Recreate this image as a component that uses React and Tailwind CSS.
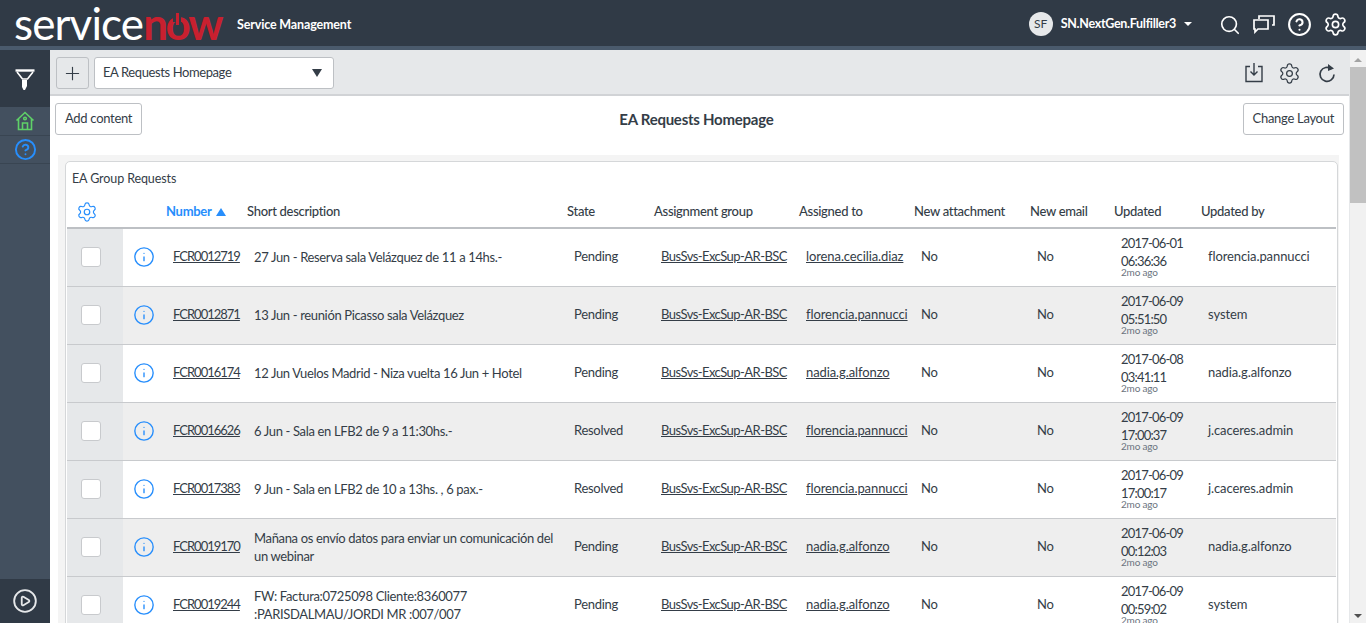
import { Search, CircleHelp, Settings, Plus, Info, CirclePlay } from 'lucide-react';

const rows = [
    { num: 'FCR0012719', desc: '27 Jun - Reserva sala Velázquez de 11 a 14hs.-', state: 'Pending', to: 'lorena.cecilia.diaz', date: '2017-06-01', time: '06:36:36', by: 'florencia.pannucci' },
    { num: 'FCR0012871', desc: '13 Jun - reunión Picasso sala Velázquez', state: 'Pending', to: 'florencia.pannucci', date: '2017-06-09', time: '05:51:50', by: 'system' },
    { num: 'FCR0016174', desc: '12 Jun Vuelos Madrid - Niza vuelta 16 Jun + Hotel', state: 'Pending', to: 'nadia.g.alfonzo', date: '2017-06-08', time: '03:41:11', by: 'nadia.g.alfonzo' },
    { num: 'FCR0016626', desc: '6 Jun - Sala en LFB2 de 9 a 11:30hs.-', state: 'Resolved', to: 'florencia.pannucci', date: '2017-06-09', time: '17:00:37', by: 'j.caceres.admin' },
    { num: 'FCR0017383', desc: '9 Jun - Sala en LFB2 de 10 a 13hs. , 6 pax.-', state: 'Resolved', to: 'florencia.pannucci', date: '2017-06-09', time: '17:00:17', by: 'j.caceres.admin' },
    { num: 'FCR0019170', desc: 'Mañana os envío datos para enviar un comunicación del un webinar', state: 'Pending', to: 'nadia.g.alfonzo', date: '2017-06-09', time: '00:12:03', by: 'nadia.g.alfonzo' },
    { num: 'FCR0019244', desc: 'FW: Factura:0725098 Cliente:8360077 :PARISDALMAU/JORDI MR :007/007', state: 'Pending', to: 'nadia.g.alfonzo', date: '2017-06-09', time: '00:59:02', by: 'system' },
];

const headers = [
    ['Short description', 320], ['State', 87], ['Assignment group', 145], ['Assigned to', 115],
    ['New attachment', 116], ['New email', 84], ['Updated', 87], ['Updated by', 135],
];

function Logo() {
    return (
        <div className="ml-[14px] w-[214px] flex items-baseline leading-[46px] text-[44px] font-['Lato',sans-serif] -mt-[1px]">
            <span className="text-white font-normal tracking-[-0.9px]">service</span>
            <span className="text-[#c8202f] font-bold tracking-[-2.5px]">
                n
                <span className="relative inline-block">
                    o
                    {/* power symbol notch in the o */}
                    <span className="absolute left-[8px] top-[13px] w-[8px] h-[9px] bg-[#303a46]" />
                    <span className="absolute left-[10.500px] top-[13px] w-[3px] h-[12px] bg-[#c8202f]" />
                </span>
                w
            </span>
        </div>
    );
}

function FilterIcon() {
    return (
        <svg width="20" height="22" viewBox="0 0 20 22" fill="none" stroke="white" strokeWidth="1.600">
            <path d="M0.500 1.500h19" strokeWidth="2.400" />
            <path d="M2 3 7.500 10h5L18 3" />
            <path d="M7 11h5v6l-2 4H8.500L7 18z" fill="white" stroke="none" />
        </svg>
    );
}

function HomeIcon() {
    return (
        <svg width="20" height="20" viewBox="0 0 20 20" fill="none" stroke="#5fd068" strokeWidth="1.600">
            <path d="M1.500 9.500 10 1.500l8.500 8M3.500 8v10.500h13V8" />
            <path d="M7.500 18.500V12h5v6.500" />
            <circle cx="10" cy="7.500" r="1.300" />
        </svg>
    );
}

function ChatIcon() {
    return (
        <svg width="22" height="20" viewBox="0 0 22 20" fill="none" stroke="white" strokeWidth="1.700">
            <path d="M6 5V2h15v9h-2" />
            <path d="M1 6h14v9H5l-3 3v-3H1z" />
        </svg>
    );
}

function ImportIcon() {
    return (
        <svg width="18" height="20" viewBox="0 0 18 20" fill="none" stroke="#343d47" strokeWidth="1.400">
            <path d="M5 3.500H1v15h16v-15h-4" />
            <path d="M9 0v12M5.500 8.500 9 12l3.500-3.500" />
        </svg>
    );
}

function RefreshIcon() {
    return (
        <svg width="18" height="20" viewBox="0 0 18 20" fill="none" stroke="#343d47" strokeWidth="1.700">
            <path d="M13.500 6A7 7 0 1 0 16 11.500" />
            <path d="M10 1l6 4.500-6 2.500z" fill="#343d47" stroke="none" />
        </svg>
    );
}

export default function App() {
    return (
        <div className="h-[623px] overflow-hidden flex flex-col text-[13px] text-[#343d47] bg-white font-['Lato',sans-serif]">
            <header className="h-[46px] shrink-0 bg-[#303a46] flex items-center text-white pt-[1px]">
                <Logo />
                <span className="ml-[9px] mt-[3px] font-bold text-[12.500px] tracking-[-0.15px]">Service Management</span>
                <div className="ml-auto flex items-center">
                    <div className="w-6 h-6 rounded-full bg-[#e6e8ea] text-[#343d47] text-[12px] flex items-center justify-center">SF</div>
                    <span className="ml-2 mt-[2px] font-bold text-[12.500px] tracking-[-0.3px]">SN.NextGen.Fulfiller3</span>
                    <span className="ml-[8px] border-x-[4px] border-x-transparent border-t-[4px] border-t-white" />
                    <Search className="ml-[27px] mt-[2px]" size={22} strokeWidth={1.800} />
                    <span className="ml-[12px]"><ChatIcon /></span>
                    <CircleHelp className="ml-[12px] mt-[2px]" size={25} strokeWidth={2} />
                    <Settings className="ml-[11px] mr-[18px] mt-[2px]" size={25} strokeWidth={1.600} />
                </div>
            </header>
            <div className="h-1 shrink-0 bg-[#4a5a6c]" />
            <div className="flex-1 min-h-0 flex">
                <aside className="w-[50px] shrink-0 flex flex-col bg-[#43505f]">
                    <div className="h-[56px] bg-[#303a46] flex items-center justify-center pt-[3px]"><FilterIcon /></div>
                    <div className="h-[29px] border-t border-[#303a46] flex items-center justify-center"><HomeIcon /></div>
                    <div className="h-[29px] border-y border-[#394552] flex items-center justify-center">
                        <CircleHelp size={23} color="#278efc" strokeWidth={2} />
                    </div>
                    <div className="mt-auto h-[44px] bg-[#303a46] flex items-center justify-center">
                        <CirclePlay size={26} color="#e6e8ea" strokeWidth={1.700} />
                    </div>
                </aside>
                <main className="flex-1 min-w-0 flex">
                    <div className="flex-1 min-w-0 flex flex-col">
                        <div className="h-[46px] shrink-0 bg-[#e6e8ea] border-b-2 border-[#d1d3d6] flex items-center pl-[6px] pt-[2px]">
                            <button className="w-[33px] h-[32px] rounded-[3px] border border-[#bdc0c4] flex items-center justify-center">
                                <Plus size={21} strokeWidth={1.300} />
                            </button>
                            <div className="ml-[5px] w-[240px] h-[32px] rounded-[3px] border border-[#bdc0c4] bg-white flex items-center justify-between pl-[8px] pr-[11px]">
                                <span className="tracking-[-0.4px]">EA Requests Homepage</span>
                                <span className="border-x-[5px] border-x-transparent border-t-[8px] border-t-[#343d47]" />
                            </div>
                            <div className="ml-auto flex items-center">
                                <ImportIcon />
                                <Settings className="ml-[15px]" size={23} strokeWidth={1.300} />
                                <span className="ml-[17px] mr-[13px]"><RefreshIcon /></span>
                            </div>
                        </div>
                        <div className="flex items-center justify-between px-[5px] pt-[7px] pb-[20px] h-[59px] shrink-0 tracking-[-0.3px]">
                            <button className="h-[32px] px-[9px] rounded-[3px] border border-[#bdc0c4]">Add content</button>
                            <h1 className="ml-[8px] text-[15px] font-bold tracking-[-0.25px]">EA Requests Homepage</h1>
                            <button className="h-[32px] px-[9px] rounded-[3px] border border-[#bdc0c4]">Change Layout</button>
                        </div>
                        <div className="ml-[8px] mr-[10px] flex-1 bg-[#f4f4f4] pl-[7px] pr-[1px] pt-[6px]">
                            <div className="rounded-t-[5px] border border-[#d5d7d9] bg-white px-[1px]">
                                <div className="h-[34px] pl-[5px] flex items-center text-[12.500px] tracking-[-0.1px]">EA Group Requests</div>
                                <table className="table-fixed w-[1269px] border-collapse text-left tracking-[-0.3px]">
                                    <thead>
                                        <tr className="h-[32px] border-b-2 border-[#bdc0c4]">
                                            <th className="w-[56px] font-medium pl-[9px]" >
                                                <Settings size={22} color="#278efc" strokeWidth={1.300} />
                                            </th>
                                            <th className="w-[43px]" />
                                            <th className="w-[81px] font-bold text-[#278efc] pt-[1px]">
                                                Number <span className="ml-[2px] inline-block border-x-[5.500px] border-x-transparent border-b-[8px] border-b-[#278efc]" />
                                            </th>
                                            {headers.map(([label, w]) => (
                                                <th key={label} style={{ width: w }} className="font-medium pt-[1px]">{label}</th>
                                            ))}
                                        </tr>
                                    </thead>
                                    <tbody>
                                        {rows.map((r, i) => (
                                            <tr key={r.num} className={`h-[58px] border-b border-[#c8cacd] [&>td:nth-child(n+3)]:pb-[1px] ${i % 2 ? 'bg-[#eeeeee]' : 'bg-white'}`}>
                                                <td className="bg-[#e6e8ea]">
                                                    <div className="ml-[14px] w-5 h-5 rounded-[3px] border border-[#c8cacd] bg-white" />
                                                </td>
                                                <td className="pl-[10px]"><Info size={22} color="#278efc" strokeWidth={1.500} /></td>
                                                <td className="pl-[7px]"><a className="underline tracking-[-1px]">{r.num}</a></td>
                                                <td className="pl-[7px] leading-[18px] tracking-[-0.35px]">{r.desc}</td>
                                                <td className="pl-[7px]">{r.state}</td>
                                                <td className="pl-[7px]"><a className="underline tracking-[-0.55px]">BusSvs-ExcSup-AR-BSC</a></td>
                                                <td className="pl-[7px] tracking-[-0.1px]"><a className="underline">{r.to}</a></td>
                                                <td className="pl-[7px]">No</td>
                                                <td className="pl-[7px]">No</td>
                                                <td className="pl-[7px] leading-[18px] tracking-[-0.8px]">
                                                    <div className="-mt-[2px]">{r.date}</div>
                                                    <div>{r.time}</div>
                                                    <div className="-mt-[3px] text-[10px] leading-[10px] tracking-[-0.2px] text-[#6b7480]">2mo ago</div>
                                                </td>
                                                <td className="pl-[7px] tracking-[-0.1px]">{r.by}</td>
                                            </tr>
                                        ))}
                                    </tbody>
                                </table>
                            </div>
                        </div>
                    </div>
                    <div className="w-[17px] shrink-0 bg-[#f1f1f1] flex flex-col items-center border-l border-[#e6e8ea]">
                        <span className="mt-[8px] border-x-[4px] border-x-transparent border-b-[4px] border-b-[#a3a3a3]" />
                        <div className="mt-[5px] w-full h-[136px] bg-[#c1c1c1]" />
                        <span className="mt-auto mb-[5px] border-x-[4px] border-x-transparent border-t-[4px] border-t-[#505050]" />
                    </div>
                </main>
            </div>
        </div>
    );
}
